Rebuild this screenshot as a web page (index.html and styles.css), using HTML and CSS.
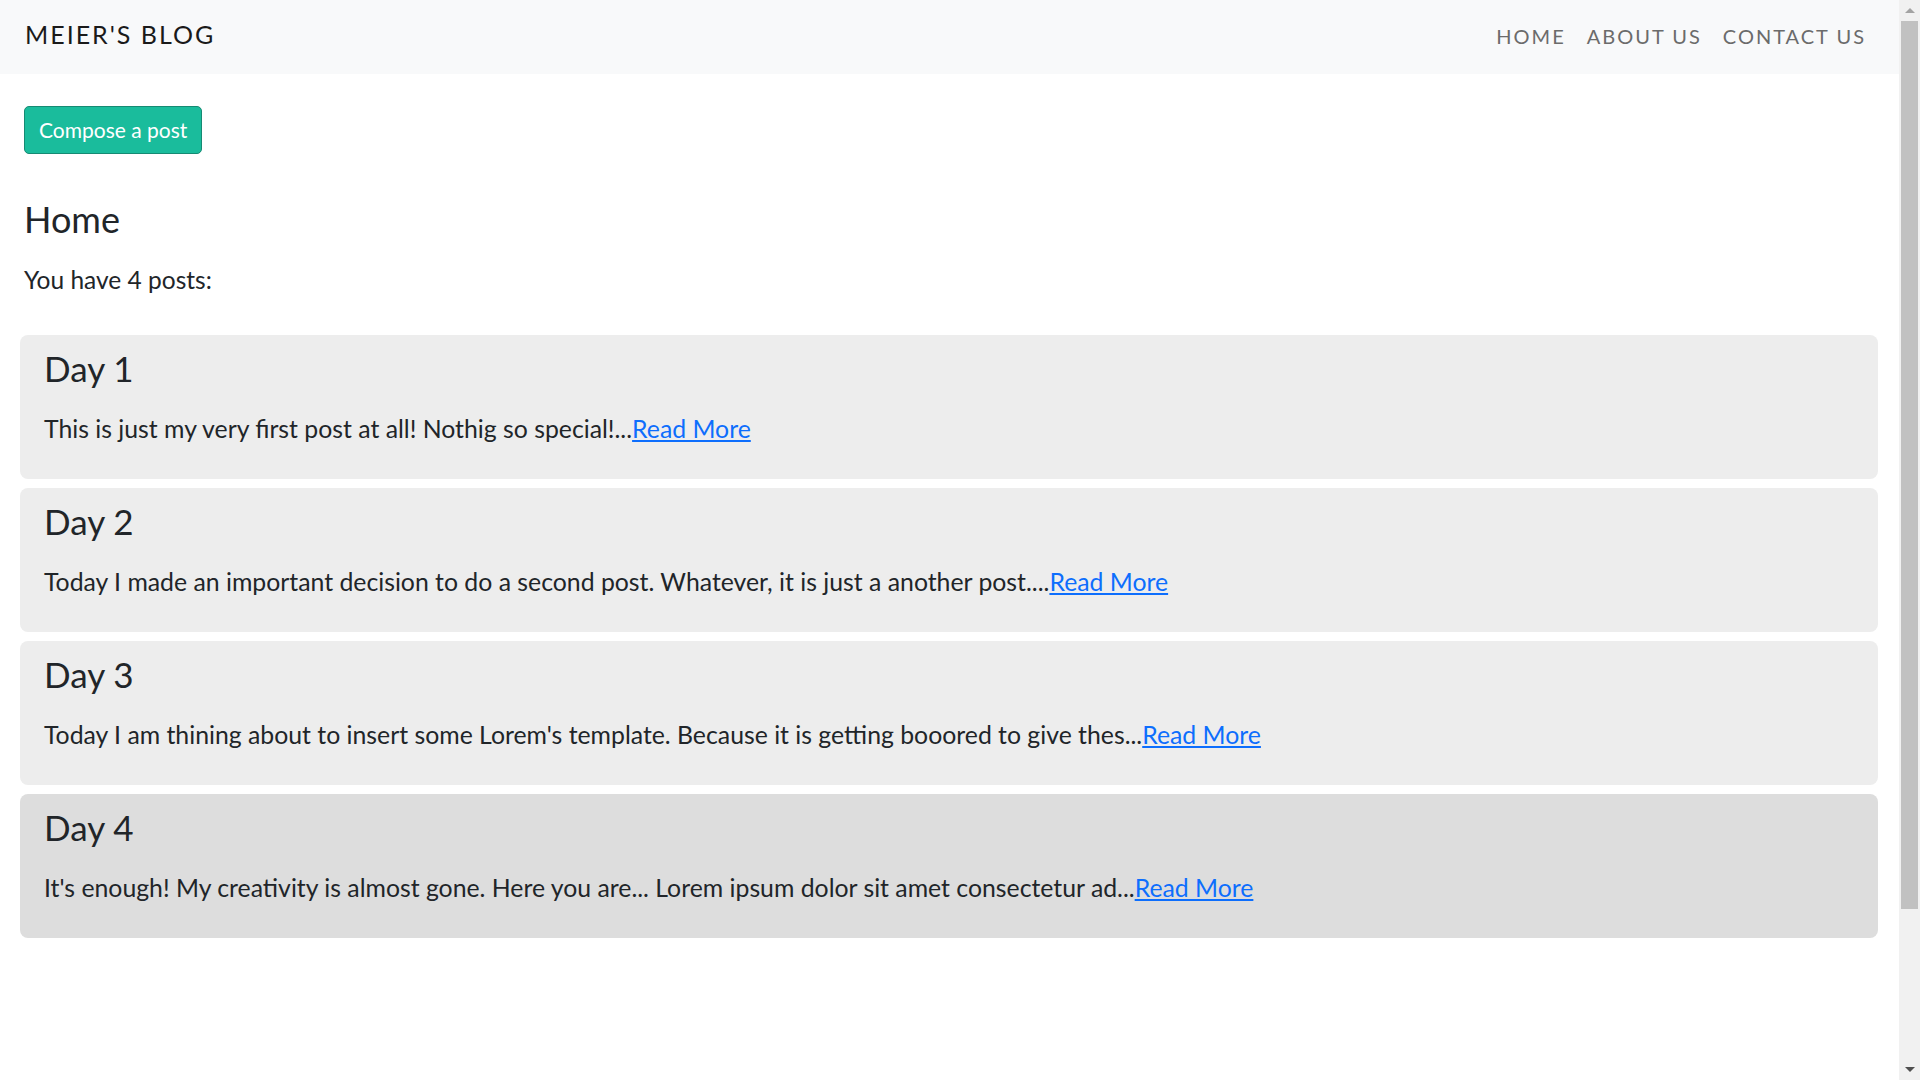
FILE: index.html
```html
<!DOCTYPE html>
<html lang="en">
<head>
<meta charset="utf-8">
<title>Meier's Blog</title>
<link rel="stylesheet" href="styles.css">
</head>
<body>
<div class="page">
  <nav class="navbar">
    <a class="brand" href="#">MEIER'S BLOG</a>
    <ul class="nav-links">
      <li><a class="nav-link" href="#">HOME</a></li>
      <li><a class="nav-link" href="#">ABOUT US</a></li>
      <li><a class="nav-link" href="#">CONTACT US</a></li>
    </ul>
  </nav>
  <main class="main">
    <section class="intro">
      <a class="btn-compose" href="#">Compose a post</a>
      <h1 class="page-title">Home</h1>
      <p class="lead">You have 4 posts:</p>
    </section>
    <section class="posts">
      <article class="post">
        <h2 class="post-title">Day 1</h2>
        <p class="post-text">This is just my very first post at all! Nothig so special!...<a class="read-more" href="#">Read More</a></p>
      </article>
      <article class="post">
        <h2 class="post-title">Day 2</h2>
        <p class="post-text">Today I made an important decision to do a second post. Whatever, it is just a another post....<a class="read-more" href="#">Read More</a></p>
      </article>
      <article class="post">
        <h2 class="post-title">Day 3</h2>
        <p class="post-text">Today I am thining about to insert some Lorem's template. Because it is getting booored to give thes...<a class="read-more" href="#">Read More</a></p>
      </article>
      <article class="post post-active">
        <h2 class="post-title">Day 4</h2>
        <p class="post-text">It's enough! My creativity is almost gone. Here you are... Lorem ipsum dolor sit amet consectetur ad...<a class="read-more" href="#">Read More</a></p>
      </article>
    </section>
  </main>
</div>
<div class="scrollbar" aria-hidden="true">
  <div class="sb-btn">
    <svg width="10" height="5" viewBox="0 0 10 5"><path d="M0 5 L5 0 L10 5 Z" fill="#a3a3a3"/></svg>
  </div>
  <div class="sb-thumb"></div>
  <div class="sb-fill"></div>
  <div class="sb-btn">
    <svg width="10" height="5" viewBox="0 0 10 5"><path d="M0 0 L10 0 L5 5 Z" fill="#505050"/></svg>
  </div>
</div>
</body>
</html>
```

FILE: styles.css
```css
* { box-sizing: border-box; }

html { background: #ffffff; }

body {
  margin: 0;
  font-family: Lato, "Open Sans", sans-serif;
  color: #212529;
  background: #ffffff;
}

.page {
  margin-right: 21px;
}

.navbar {
  height: 74px;
  background: #f8f9fa;
  display: flex;
  align-items: baseline;
  justify-content: space-between;
  padding: 19px 33px 0 25px;
}

.brand {
  font-size: 25px;
  line-height: 30px;
  letter-spacing: 2px;
  color: #1a1a1a;
  text-decoration: none;
}

.nav-links {
  list-style: none;
  margin: 0;
  padding: 0;
  display: flex;
  gap: 21px;
}

.nav-link {
  font-size: 20px;
  line-height: 30px;
  letter-spacing: 2px;
  color: #6b6b6b;
  text-decoration: none;
}

.main {
  padding: 32px 21px 324px 20px;
}

.intro {
  padding-left: 4px;
  display: flex;
  flex-direction: column;
  align-items: flex-start;
}

.btn-compose {
  display: inline-block;
  height: 48px;
  padding: 0 14px;
  font-size: 21px;
  line-height: 46px;
  color: #ffffff;
  background: #1abc9c;
  border: 1px solid #168a73;
  border-radius: 5px;
  text-decoration: none;
}

.page-title {
  margin: 44px 0 0;
  font-size: 36px;
  line-height: 42px;
  font-weight: 400;
}

.lead {
  margin: 22px 0 0;
  font-size: 24.5px;
  line-height: 36px;
}

.posts {
  margin-top: 37px;
  display: flex;
  flex-direction: column;
  gap: 9px;
}

.post {
  background: #ededed;
  border-radius: 8px;
  padding: 12px 24px 33px 24px;
  height: 144px;
}

.post-active { background: #dddddd; }

.post-title {
  margin: 0;
  font-size: 35px;
  line-height: 43px;
  font-weight: 400;
}

.post-text {
  margin: 21px 0 0;
  font-size: 24.8px;
  line-height: 36px;
}

.read-more {
  color: #0d6efd;
  text-decoration: underline;
}

/* fake browser scrollbar (overlay on the right edge) */
.scrollbar {
  position: fixed;
  top: 0;
  right: 0;
  width: 21px;
  height: 100vh;
  background: #f1f1f1;
  display: flex;
  flex-direction: column;
}

.sb-btn {
  height: 21px;
  flex: 0 0 21px;
  display: flex;
  align-items: center;
  justify-content: center;
  padding-left: 1px;
}

.sb-thumb {
  height: 888px;
  margin: 0 2px;
  background: #c1c1c1;
}

.sb-fill { flex: 1; }
```
